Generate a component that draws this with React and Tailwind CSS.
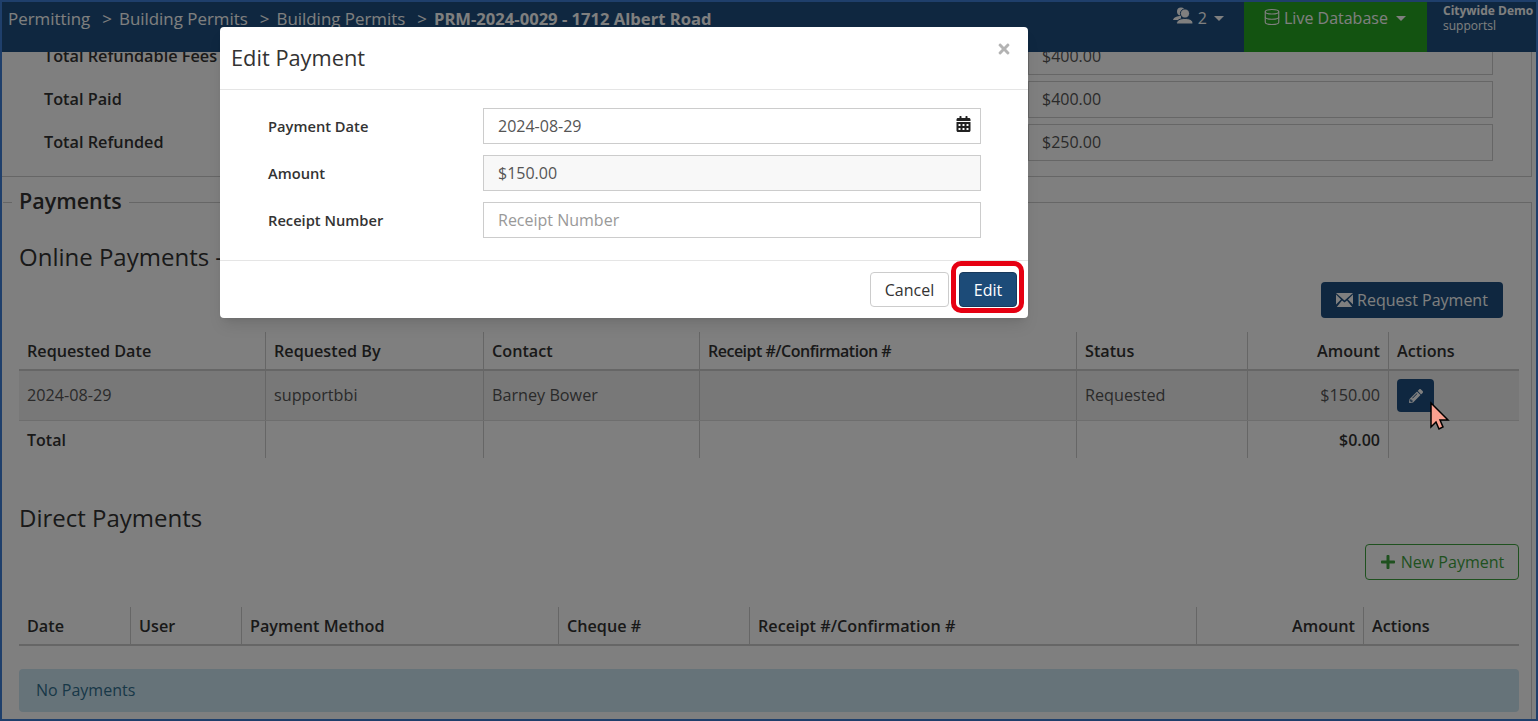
import { Database } from 'lucide-react';
import { FaCalendarAlt, FaPencilAlt, FaPlus, FaTimes } from 'react-icons/fa';

const Caret = () => (
  <span className="inline-block w-0 h-0 border-x-[5px] border-x-transparent border-t-[5px] border-t-current" />
);

const Crumb = ({ children, bold }) => (
  <>
    <span className="ml-[12px] mr-[7px]">&gt;</span>
    <span className={bold ? 'font-bold text-[16.6px]' : ''}>{children}</span>
  </>
);

const UsersIcon = () => (
  <svg className="mt-[1px]" width="20" height="17" viewBox="0 0 20 17">
    <circle cx="8" cy="4.5" r="4" fill="#fff" />
    <path d="M0 13 C1 10 4 9 8 9 L8 13 Z" fill="#fff" />
    <circle cx="12" cy="6.5" r="4.6" fill="#fff" stroke="#1e4f80" strokeWidth="1" />
    <path d="M3.5 17 C3.5 13 7 11.5 12 11.5 C17 11.5 20 13 20 17 Z" fill="#fff" stroke="#1e4f80" strokeWidth="1" />
  </svg>
);

const EnvelopeIcon = () => (
  <svg width="17" height="14" viewBox="0 0 17 14" fill="#fff">
    <path d="M0 0 H17 L8.5 7.5 Z" />
    <path d="M0 1.6 L5 6.4 L0 11.6 Z" />
    <path d="M17 1.6 L12 6.4 L17 11.6 Z" />
    <path d="M0.8 14 L6 7.6 L8.5 9.6 L11 7.6 L16.2 14 Z" />
  </svg>
);

const SummaryRow = ({ label, value }) => (
  <div className="flex items-center h-[37px]">
    <div className="w-[1026px] pl-[42px] pb-[1px] text-[16.25px] font-semibold text-[#333]">{label}</div>
    <div className="w-[465px] h-full border border-[#ccc] flex items-center px-[13px] pb-[1px] text-[#555]">{value}</div>
  </div>
);

const HeadCell = ({ width, right, children, last, tight }) => (
  <div
    className={`${width} px-[8px] pt-[1px] flex items-center font-semibold text-[#333] whitespace-nowrap ${tight ? 'text-[16px] tracking-[-0.5px]' : 'text-[16.2px]'} ${last ? '' : 'border-r border-[#ccc]'} ${right ? 'justify-end' : ''}`}
  >
    {children}
  </div>
);

const BodyCell = ({ width, right, children, last, bold }) => (
  <div
    className={`${width} px-[8px] flex items-center ${last ? '' : 'border-r border-[#ccc]'} ${right ? 'justify-end' : ''} ${bold ? 'font-semibold text-[#333]' : 'text-[#555] text-[16.2px]'}`}
  >
    {children}
  </div>
);

const FormRow = ({ label, children }) => (
  <div className="flex items-center h-[36px]">
    <label className="w-[263px] pl-[48px] pt-[1px] text-[14.7px] font-semibold text-[#333]">{label}</label>
    <div className="w-[498px] h-full">{children}</div>
  </div>
);

const Cursor = () => (
  <svg className="absolute z-20 left-[1427px] top-[399px]" width="24" height="32" viewBox="0 0 24 32">
    <path d="M2 2 L2 26 L7 21 L10 28 L14 26 L11 19 L19 19 Z" fill="#f9a08f" stroke="#000" strokeWidth="1.5" />
  </svg>
);

export default function App() {
  return (
    <div
      className="relative w-[1538px] h-[721px] overflow-hidden border-2 border-[#1f3f6b] bg-white text-[16px]"
      style={{ fontFamily: '"Open Sans", sans-serif' }}
    >
      {/* Top bar */}
      <div className="relative z-10 h-[50px] bg-[#1e4f80] flex text-white">
        <div className="flex-1 pl-[6px] pt-[5px] text-[16.9px] leading-[24px] whitespace-nowrap">
          <span>Permitting</span>
          <Crumb>Building Permits</Crumb>
          <Crumb>Building Permits</Crumb>
          <Crumb bold>PRM-2024-0029 - 1712 Albert Road</Crumb>
        </div>
        <div className="flex items-start gap-[5px] pt-[4px] mr-[20px] leading-[24px]">
          <UsersIcon />
          <span>2</span>
          <span className="ml-[2px] mt-[10px] flex"><Caret /></span>
        </div>
        <div className="w-[183px] h-[50px] bg-[#26a622] flex items-start pl-[19px] pt-[4px] leading-[24px] mr-[16px]">
          <Database className="w-[18px] h-[18px] mt-[2px] mr-[3px]" strokeWidth={1.5} />
          <span>Live Database</span>
          <span className="ml-[8px] mt-[10px] flex"><Caret /></span>
        </div>
        <div className="w-[93px] text-[12px] leading-[15px] pt-[1px] whitespace-nowrap">
          <div className="font-bold">Citywide Demo</div>
          <div>supportsl</div>
        </div>
      </div>

      {/* Scrolled page body */}
      <div className="-mt-[14px]">
        <div className="w-[1530px] border-r border-b border-[#ccc] pb-[15px]">
          <div className="flex flex-col gap-[6px]">
            <SummaryRow label="Total Refundable Fees" value="$400.00" />
            <SummaryRow label="Total Paid" value="$400.00" />
            <SummaryRow label="Total Refunded" value="$250.00" />
          </div>
        </div>

        <fieldset className="relative ml-[1px] mt-[12px] w-[1529px] h-[600px] border-r border-t border-[#ccc]">
          <legend className="ml-[9px] px-[7px] -mt-[14px] text-[21.5px] font-semibold leading-[26px] text-[#333]">
            <span className="relative -top-[1px]">Payments</span>
          </legend>
          <div className="pl-[16px] pr-[12px]">
            <h3 className="mt-[26px] text-[24px] leading-[32px] text-[#333]">Online Payments - 2024</h3>

            <div className="flex justify-end mt-[9px] pr-[16px]">
              <button className="h-[36px] w-[182px] rounded bg-[#1e4f80] text-white flex items-center justify-center gap-[4px]">
                <EnvelopeIcon />
                Request Payment
              </button>
            </div>

            <div className="mt-[14px] w-[1500px]">
              <div className="flex h-[39px] border-b-2 border-[#ccc]">
                <HeadCell width="w-[247px]">Requested Date</HeadCell>
                <HeadCell width="w-[218px]">Requested By</HeadCell>
                <HeadCell width="w-[216px]">Contact</HeadCell>
                <HeadCell width="w-[377px]" tight>Receipt #/Confirmation #</HeadCell>
                <HeadCell width="w-[171px]">Status</HeadCell>
                <HeadCell width="w-[141px]" right>Amount</HeadCell>
                <HeadCell width="w-[130px]" last>Actions</HeadCell>
              </div>
              <div className="flex h-[50px] bg-[#f0f0f0] border-b border-[#ddd]">
                <BodyCell width="w-[247px]">2024-08-29</BodyCell>
                <BodyCell width="w-[218px]">supportbbi</BodyCell>
                <BodyCell width="w-[216px]">Barney Bower</BodyCell>
                <BodyCell width="w-[377px]"></BodyCell>
                <BodyCell width="w-[171px]">Requested</BodyCell>
                <BodyCell width="w-[141px]" right>$150.00</BodyCell>
                <BodyCell width="w-[130px]" last>
                  <button className="w-[37px] h-[33px] rounded bg-[#1e4f80] text-white flex items-center justify-center">
                    <FaPencilAlt className="w-[14px] h-[14px]" />
                  </button>
                </BodyCell>
              </div>
              <div className="flex h-[37px]">
                <BodyCell width="w-[247px]" bold>Total</BodyCell>
                <BodyCell width="w-[218px]"></BodyCell>
                <BodyCell width="w-[216px]"></BodyCell>
                <BodyCell width="w-[377px]"></BodyCell>
                <BodyCell width="w-[171px]"></BodyCell>
                <BodyCell width="w-[141px]" right bold>$0.00</BodyCell>
                <BodyCell width="w-[130px]" last></BodyCell>
              </div>
            </div>

            <h3 className="mt-[44px] text-[24px] leading-[32px] text-[#333]">Direct Payments</h3>

            <div className="flex justify-end mt-[10px]">
              <button className="h-[36px] w-[154px] rounded border border-[#3fa33f] text-[#3fa33f] flex items-center justify-center gap-[5px]">
                <FaPlus className="w-[16px] h-[16px]" />
                New Payment
              </button>
            </div>

            <div className="mt-[27px] w-[1500px] flex h-[39px] border-b-2 border-[#ccc]">
              <HeadCell width="w-[112px]">Date</HeadCell>
              <HeadCell width="w-[111px]">User</HeadCell>
              <HeadCell width="w-[317px]">Payment Method</HeadCell>
              <HeadCell width="w-[191px]">Cheque #</HeadCell>
              <HeadCell width="w-[447px]">Receipt #/Confirmation #</HeadCell>
              <HeadCell width="w-[167px]" right>Amount</HeadCell>
              <HeadCell width="w-[155px]" last>Actions</HeadCell>
            </div>

            <div className="mt-[23px] w-[1500px] h-[43px] rounded bg-[#cde6f3] text-[#31708f] flex items-center pl-[17px] pb-[2px]">No Payments</div>
          </div>
        </fieldset>
      </div>

      {/* Modal backdrop */}
      <div className="absolute z-20 inset-0 bg-black/50" />

      <Cursor />

      {/* Edit Payment dialog */}
      <div className="absolute z-30 left-[218px] top-[25px] w-[808px] h-[291px] bg-white rounded shadow-lg text-[#333]">
        <div className="relative h-[63px] border-b border-[#e5e5e5] pl-[11px] pt-[16px]">
          <h4 className="text-[21.8px] leading-[29px]">Edit Payment</h4>
          <FaTimes className="absolute right-[16px] top-[14px] w-[16px] h-[16px] text-[#b3b3b3]" />
        </div>
        <div className="pt-[18px] h-[171px] flex flex-col gap-[11px] border-b border-[#e5e5e5]">
          <FormRow label="Payment Date">
            <div className="relative h-full border border-[#ccc] flex items-center pl-[14px] text-[#555]">
              2024-08-29
              <FaCalendarAlt className="absolute right-[9px] top-[7px] w-[15px] h-[16px] text-[#222]" />
            </div>
          </FormRow>
          <FormRow label="Amount">
            <div className="h-full border border-[#ccc] bg-[#f8f8f8] flex items-center pl-[14px] text-[#555]">$150.00</div>
          </FormRow>
          <FormRow label="Receipt Number">
            <input
              placeholder="Receipt Number"
              className="w-full h-full border border-[#ccc] pl-[14px] outline-none placeholder:text-[#999]"
            />
          </FormRow>
        </div>
        <div className="flex justify-end items-center gap-[10px] pt-[11px] pr-[11px]">
          <button className="w-[79px] h-[35px] rounded border border-[#ccc] text-[#333]">Cancel</button>
          <div className="relative">
            <button className="block w-[58px] h-[35px] rounded border border-[#17395c] bg-[#1c4b78] text-white">Edit</button>
            <div className="absolute -left-[8px] -right-[7px] -top-[11px] -bottom-[6px] rounded-[10px] border-[5px] border-[#e60012]" />
          </div>
        </div>
      </div>
    </div>
  );
}
